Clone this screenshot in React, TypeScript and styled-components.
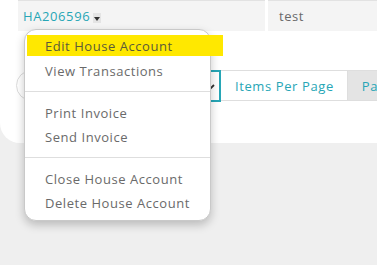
import React from "react";
import styled, { createGlobalStyle } from "styled-components";

const GlobalStyle = createGlobalStyle`
  body {
    margin: 0;
    background: #efefef;
    font-family: "Open Sans", "DejaVu Sans", sans-serif;
  }
`;

const TEAL = "#27a6b6";

const App = () => {
  return (
    <>
      <GlobalStyle />
      <Page>
        <Card>
          <Row>
            <Cell>
              <AccountLink>HA206596</AccountLink>
              <Caret />
            </Cell>
            <Cell $inset={11}>test</Cell>
          </Row>
          <Pager>
            <SearchPill />
            <PageSizeSelect>
              <Chevron viewBox="0 0 10 10">
                <path d="M2 4 L5 7 L8 4" fill="none" stroke="#333" strokeWidth="1.8" />
              </Chevron>
            </PageSizeSelect>
            <PagerLabel>Items Per Page</PagerLabel>
            <PagerLabel $muted>Page</PagerLabel>
          </Pager>
          <Menu>
            <Group>
              <MenuItem $active>Edit House Account</MenuItem>
              <MenuItem>View Transactions</MenuItem>
            </Group>
            <Divider />
            <Group>
              <MenuItem>Print Invoice</MenuItem>
              <MenuItem>Send Invoice</MenuItem>
            </Group>
            <Divider />
            <Group>
              <MenuItem>Close House Account</MenuItem>
              <MenuItem>Delete House Account</MenuItem>
            </Group>
          </Menu>
        </Card>
      </Page>
    </>
  );
};

export default App;

const Page = styled.div`
  width: 377px;
  height: 265px;
  overflow: hidden;
`;

const Card = styled.div`
  position: relative;
  height: 143px;
  background: #fff;
  border-bottom-left-radius: 20px;
`;

const Row = styled.div`
  display: grid;
  grid-template-columns: 247px 1fr;
  gap: 3px;
  margin-left: 18px;
  height: 31px;
`;

const Cell = styled.div<{ $inset?: number }>`
  display: flex;
  align-items: center;
  padding-left: ${({ $inset }) => $inset ?? 5}px;
  background: #f4f4f4;
  border-top: 1px solid #e2e2e2;
  font-size: 13px;
  letter-spacing: 0.5px;
  color: #6a6a6a;
`;

const AccountLink = styled.span`
  color: ${TEAL};
  font-size: 13px;
  letter-spacing: 0.6px;
`;

const Caret = styled.span`
  position: relative;
  display: inline-block;
  width: 8px;
  height: 10px;
  margin-left: 3px;
  margin-top: 3px;
  background: #e4e4e4;

  &::after {
    content: "";
    position: absolute;
    left: 1px;
    top: 4px;
    border-left: 3px solid transparent;
    border-right: 3px solid transparent;
    border-top: 4px solid #333;
  }
`;

const Pager = styled.div`
  display: flex;
  align-items: stretch;
  margin: 39px 0 0 16px;
  height: 31px;

  & > * {
    flex-shrink: 0;
  }
`;

const SearchPill = styled.div`
  width: 120px;
  border: 1px solid #dcdcdc;
  border-radius: 16px 0 0 16px;
`;

const PageSizeSelect = styled.div`
  display: flex;
  align-items: center;
  justify-content: flex-end;
  width: 83px;
  padding-right: 3px;
  border: 2px solid ${TEAL};
  box-sizing: border-box;
  height: 32px;
`;

const Chevron = styled.svg`
  width: 10px;
  height: 10px;
`;

const PagerLabel = styled.div<{ $muted?: boolean }>`
  display: flex;
  align-items: center;
  padding: 0 13px 0 14px;
  border: 1px solid #dedede;
  border-left: none;
  background: ${({ $muted }) => ($muted ? "#e4e4e4" : "#fff")};
  color: ${TEAL};
  font-size: 13px;
  letter-spacing: 0.6px;
  white-space: nowrap;
`;

const Menu = styled.div`
  position: absolute;
  left: 24px;
  top: 29px;
  width: 185px;
  padding: 5px 0;
  background: #fff;
  border: 1px solid #c9c9c9;
  border-radius: 12px;
  box-shadow: 0 4px 10px rgba(0, 0, 0, 0.22);
`;

const Group = styled.div`
  display: flex;
  flex-direction: column;
`;

const MenuItem = styled.div<{ $active?: boolean }>`
  display: flex;
  align-items: center;
  height: 24px;
  padding-left: 20px;
  font-size: 13px;
  letter-spacing: 0.55px;
  color: #6a6a6a;
  white-space: nowrap;

  ${({ $active }) =>
    $active &&
    `
    height: 21px;
    margin: 0 -13px 3px 2px;
    padding-left: 18px;
    background: #ffe800;
    color: #5a5a3a;
  `}
`;

const Divider = styled.div`
  height: 1px;
  margin: 8px 0 9px;
  background: #dedede;
`;
